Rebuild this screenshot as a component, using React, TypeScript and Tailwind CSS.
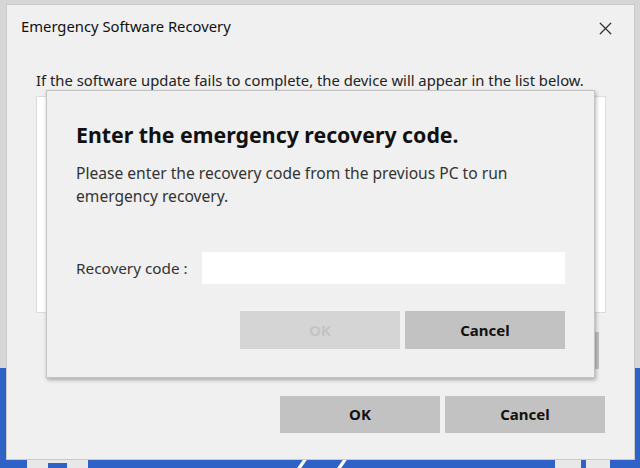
import { X } from "lucide-react"

const font = { fontFamily: '"Noto Sans", "Open Sans", sans-serif' }

const Btn = ({ label, disabled, className = "" }: { label: string; disabled?: boolean; className?: string }) => (
  <div
    className={`flex items-center justify-center w-[160px] text-[15px] font-bold ${
      disabled ? "bg-[#d5d5d5] text-[#c4c4c4]" : "bg-[#c2c2c2] text-[#111]"
    } ${className}`}
  >
    {label}
  </div>
)

const RecoveryCodeDialog = () => (
  <div className="absolute left-[46px] top-[90px] w-[549px] h-[288px] bg-[#f0f0f0] border border-[#c4c4c4] shadow-[1px_2px_4px_rgba(0,0,0,0.3)] flex flex-col pl-[29px] pr-[29px]">
    <div className="mt-[31px] h-[26px] flex items-center text-[21.3px] font-bold text-[#111]">
      Enter the emergency recovery code.
    </div>
    <div className="mt-[14px] text-[15.6px] leading-[23px] text-[#333]">
      Please enter the recovery code from the previous PC to run
      <br />
      emergency recovery.
    </div>
    <div className="mt-[44px] flex items-center h-[32px]">
      <div className="w-[126px] text-[15.3px] text-[#333]">Recovery code :</div>
      <div className="w-[363px] h-[32px] bg-white" />
    </div>
    <div className="mt-[27px] flex justify-end gap-[5px]">
      <Btn label="OK" disabled className="h-[38px] w-[159px]" />
      <Btn label="Cancel" className="h-[38px]" />
    </div>
  </div>
)

export default function App() {
  return (
    <div className="relative w-[640px] h-[468px] overflow-hidden flex flex-col" style={font}>
      <div className="h-[368px] bg-[#d6d6d6]" />
      <div className="flex-1 bg-[#2f62c7] relative">
        <div className="absolute left-[27px] top-[92px] w-[61px] h-[8px] bg-[#e8e8e8]" />
        <div className="absolute left-[48px] top-[95px] w-[19px] h-[5px] bg-[#2f62c7]" />
        <div className="absolute left-[300px] top-[92px] w-[4px] h-[8px] bg-white -skew-x-[35deg]" />
        <div className="absolute left-[340px] top-[92px] w-[4px] h-[8px] bg-white -skew-x-[35deg]" />
        <div className="absolute left-[555px] top-[91px] w-[26px] h-[9px] bg-[#e8e8e8]" />
        <div className="absolute left-[586px] top-[91px] w-[24px] h-[9px] bg-[#e8e8e8]" />
      </div>

      <div className="absolute left-[6px] top-[4px] w-[629px] h-[456px] bg-[#f0f0f0] border border-[#c9c9c9] flex flex-col">
        <div className="h-[44px] flex items-center justify-between pl-[14px] pr-[18px]">
          <div className="text-[14.8px] text-[#111] mt-[-1px]">Emergency Software Recovery</div>
          <X size={21} strokeWidth={1.5} className="text-[#333] mt-[3px]" />
        </div>
        <div className="pl-[29px] h-[20px] mt-[21px] flex items-center text-[14.8px] text-[#222]">
          If the software update fails to complete, the device will appear in the list below.
        </div>
        <div className="ml-[29px] mt-[6px] w-[570px] h-[217px] bg-white border border-[#dcdcdc]" />
        <div className="mt-[19px] flex justify-end pr-[35px]">
          <Btn label="Refresh" className="h-[37px]" />
        </div>
        <div className="mt-[27px] flex justify-end gap-[5px] pr-[29px]">
          <Btn label="OK" className="h-[37px]" />
          <Btn label="Cancel" className="h-[37px] w-[159px]" />
        </div>
      </div>

      <RecoveryCodeDialog />
    </div>
  )
}
